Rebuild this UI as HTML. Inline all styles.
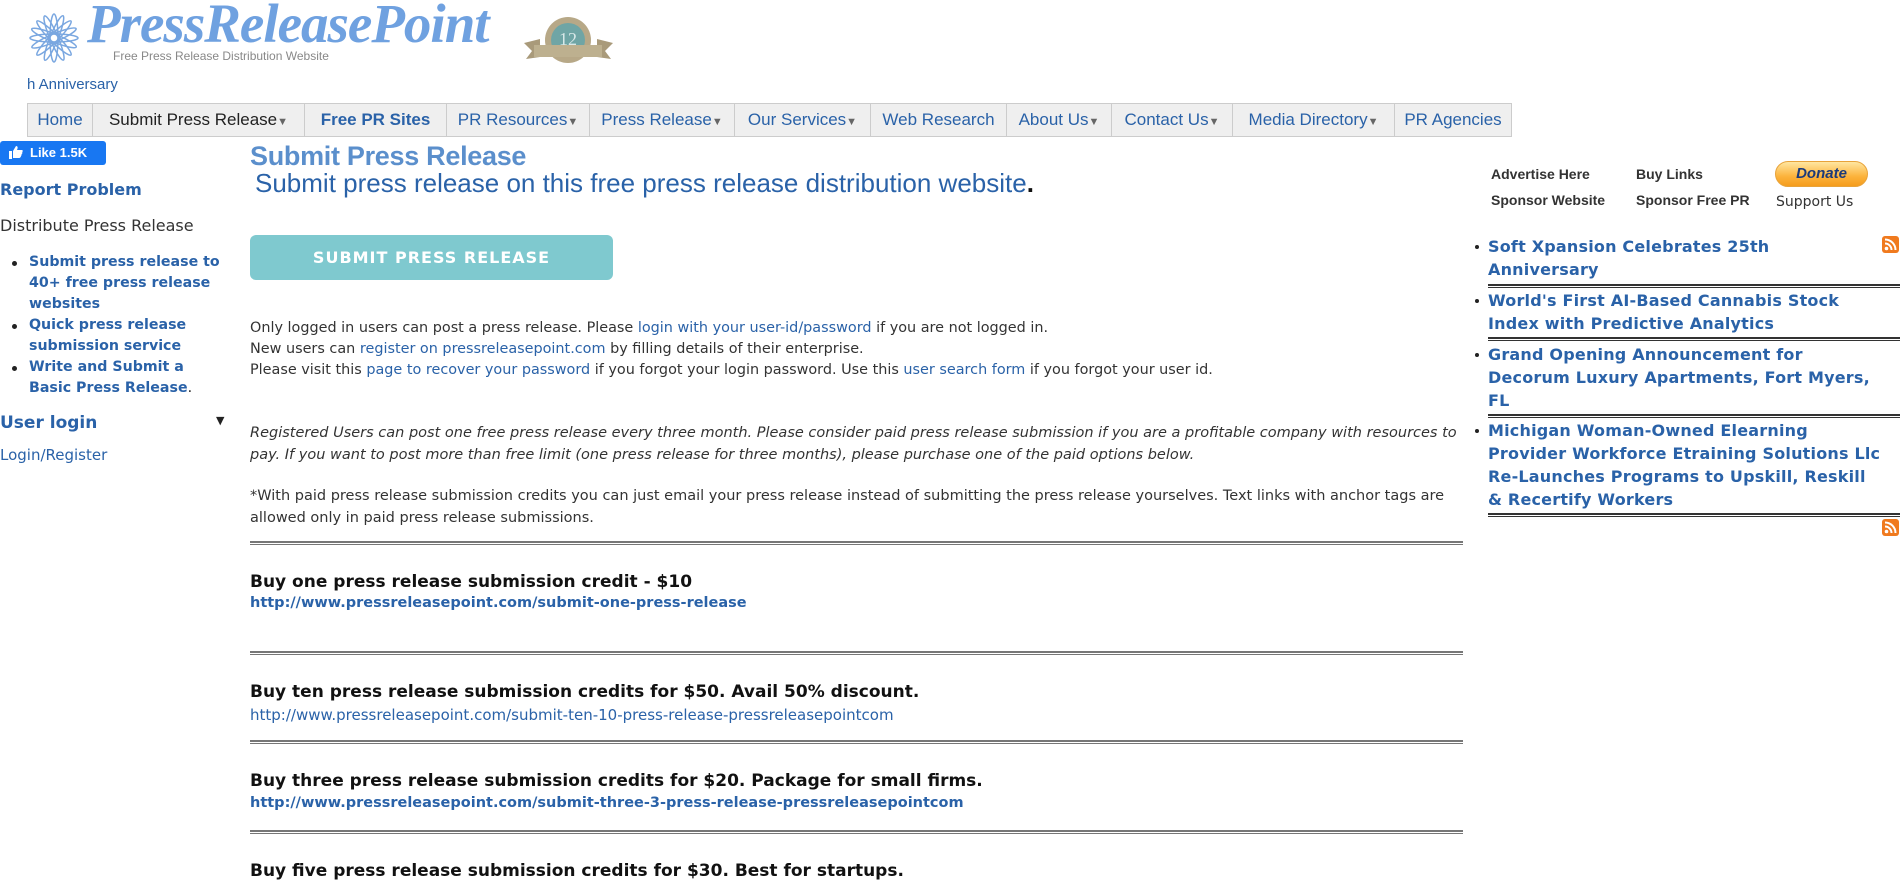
<!DOCTYPE html>
<html><head><meta charset="utf-8"><style>
*{margin:0;padding:0;box-sizing:border-box}
body{width:1903px;height:882px;overflow:hidden;background:#fff;font-family:"DejaVu Sans",sans-serif;position:relative;color:#222}
.a{position:absolute;white-space:nowrap}
a,.l{color:#2a62a8;text-decoration:none}
.nav{position:absolute;left:27px;top:103px;height:34px;display:flex;border:1px solid #ccc;background:#efefef}
.nav div{height:32px;line-height:32px;border-right:1px solid #ccc;font-family:"Liberation Sans",sans-serif;font-size:17px;color:#2a62a8;text-align:center}
.nav div:last-child{border-right:0}
.tri{color:#666;font-size:11px}
.hr{position:absolute;left:250px;width:1213px;height:4px;border-top:2px solid #777;border-bottom:1px solid #777}
.buy{position:absolute;left:250px;font-weight:bold;font-size:17px;white-space:nowrap;color:#111}
.url{position:absolute;left:250px;font-size:15px;color:#2a62a8;white-space:nowrap}
.news{position:absolute;left:1488px;font-weight:bold;font-size:16px;line-height:23px;color:#2a62a8;letter-spacing:.2px}
.news:before{content:"";position:absolute;left:-13px;top:10px;width:4px;height:4px;background:#222;border-radius:50%}
.nh{position:absolute;left:1488px;width:412px;height:4px;border-top:2px solid #333;border-bottom:1px solid #333}
.rss{position:absolute;left:1882px;width:17px;height:17px}
.side li{margin-left:29px;list-style:none;position:relative}
.side li:before{content:"";position:absolute;left:-17px;top:9px;width:5px;height:5px;background:#222;border-radius:50%}
</style></head><body>
<svg class="a" style="left:27px;top:12px" width="54" height="52" viewBox="0 0 54 52"><g fill="none" stroke="#7aa7e0" stroke-width="1.5"><g transform="translate(27,26)">
<ellipse rx="4" ry="24"/><ellipse rx="4" ry="24" transform="rotate(22)"/><ellipse rx="4" ry="24" transform="rotate(45)"/><ellipse rx="4" ry="24" transform="rotate(67)"/><ellipse rx="4" ry="24" transform="rotate(90)"/><ellipse rx="4" ry="24" transform="rotate(112)"/><ellipse rx="4" ry="24" transform="rotate(135)"/><ellipse rx="4" ry="24" transform="rotate(157)"/><circle r="6"/></g></g></svg>
<div class="a" style="left:87px;top:-8px;font-family:'Liberation Serif',serif;font-style:italic;font-weight:bold;font-size:55px;color:#6fa1e0;letter-spacing:-1px">PressReleasePoint</div>
<div class="a" style="left:113px;top:49px;font-family:'Liberation Sans',sans-serif;font-size:12px;color:#888">Free Press Release Distribution Website</div>
<svg class="a" style="left:520px;top:15px" width="97" height="53" viewBox="0 0 97 53"><path d="M4 28 L20 24 L20 42 L6 44 L12 36Z M93 28 L77 24 L77 42 L91 44 L85 36Z" fill="#a99a7a"/><circle cx="48" cy="25" r="23" fill="#b7a887"/><circle cx="48" cy="25" r="17" fill="#6fa5a5"/><rect x="14" y="30" width="68" height="12" fill="#bdb08f"/><text x="48" y="30" font-size="18" fill="#d8e8e8" text-anchor="middle" font-family="Liberation Serif">12</text></svg>
<div class="a" style="left:27px;top:76px;font-family:'Liberation Sans',sans-serif;font-size:15px;color:#2a62a8">h Anniversary</div>
<div class="nav">
<div style="width:65px">Home</div>
<div style="width:212px;color:#222">Submit Press Release<span class="tri">▼</span></div>
<div style="width:142px;font-weight:bold">Free PR Sites</div>
<div style="width:143px">PR Resources<span class="tri">▼</span></div>
<div style="width:145px">Press Release<span class="tri">▼</span></div>
<div style="width:136px">Our Services<span class="tri">▼</span></div>
<div style="width:136px">Web Research</div>
<div style="width:105px">About Us<span class="tri">▼</span></div>
<div style="width:121px">Contact Us<span class="tri">▼</span></div>
<div style="width:162px">Media Directory<span class="tri">▼</span></div>
<div style="width:116px">PR Agencies</div>
</div>
<div class="a" style="left:0;top:141px;width:106px;height:24px;background:#1877f2;border-radius:3px;color:#fff;font-family:'Liberation Sans',sans-serif;font-weight:bold;font-size:13px;line-height:24px;padding-left:30px">Like 1.5K<svg style="position:absolute;left:9px;top:5px" width="14" height="13" viewBox="0 0 14 13"><path d="M0 5h3v8H0z M4 5 L7 0 C9 0 9 2 8 4 H13 C14 4 14 6 13 6 C14 7 13 8 12.5 8 C13 9 12 10 12 10 C12 11 11 12 10 12 H4Z" fill="#fff"/></svg></div>
<div class="a" style="left:0;top:180px;font-size:16px;font-weight:bold;color:#2a62a8">Report Problem</div>
<div class="a" style="left:0;top:216px;font-size:16px;color:#333">Distribute Press Release</div>
<ul class="side a" style="left:0;top:252px;font-size:14.2px;font-weight:bold;line-height:21px;color:#2a62a8">
<li>Submit press release to<br>40+ free press release<br>websites</li>
<li>Quick press release<br>submission service</li>
<li>Write and Submit a<br>Basic Press Release<span style="color:#222;font-weight:normal">.</span></li></ul>
<div class="a" style="left:0;top:413px;font-size:17px;font-weight:bold;color:#2a62a8">User login</div>
<div class="a" style="left:216px;top:414px;font-size:11px;color:#222">▼</div>
<div class="a" style="left:0;top:446px;font-size:15px;color:#2a62a8">Login/Register</div>

<div class="a" style="left:250px;top:141px;font-family:'Liberation Sans',sans-serif;font-size:27px;font-weight:bold;color:#5b8fcc;letter-spacing:-.3px">Submit Press Release</div>
<div class="a" style="left:255px;top:168px;font-family:'Liberation Sans',sans-serif;font-size:26px;color:#2a62a8">Submit press release on this free press release distribution website<span style="color:#111;font-weight:bold">.</span></div>
<div class="a" style="left:250px;top:235px;width:363px;height:45px;background:#7fc9cf;border-radius:6px;color:#fff;font-weight:bold;font-size:16px;line-height:45px;text-align:center;letter-spacing:1px">SUBMIT PRESS RELEASE</div>
<div class="a" style="left:250px;top:318px;font-size:14.4px;line-height:21px;color:#333">Only logged in users can post a press release. Please <a>login with your user-id/password</a> if you are not logged in.<br>New users can <a>register on pressreleasepoint.com</a> by filling details of their enterprise.<br>Please visit this <a>page to recover your password</a> if you forgot your login password. Use this <a>user search form</a> if you forgot your user id.</div>
<div class="a" style="left:250px;top:422px;width:1213px;white-space:normal;font-size:14.5px;line-height:22px;font-style:italic;color:#333">Registered Users can post one free press release every three month. Please consider paid press release submission if you are a profitable company with resources to pay. If you want to post more than free limit (one press release for three months), please purchase one of the paid options below.</div>
<div class="a" style="left:250px;top:485px;width:1213px;white-space:normal;font-size:14.5px;line-height:22px;color:#333">*With paid press release submission credits you can just email your press release instead of submitting the press release yourselves. Text links with anchor tags are allowed only in paid press release submissions.</div>
<div class="hr" style="top:541px"></div>
<div class="buy" style="top:572px">Buy one press release submission credit - $10</div>
<div class="url" style="top:595px;font-weight:bold;font-size:14.5px">http://www.pressreleasepoint.com/submit-one-press-release</div>
<div class="hr" style="top:651px"></div>
<div class="buy" style="top:682px">Buy ten press release submission credits for $50. Avail 50% discount.</div>
<div class="url" style="top:706px">http://www.pressreleasepoint.com/submit-ten-10-press-release-pressreleasepointcom</div>
<div class="hr" style="top:740px"></div>
<div class="buy" style="top:771px">Buy three press release submission credits for $20. Package for small firms.</div>
<div class="url" style="top:795px;font-weight:bold;font-size:14.5px">http://www.pressreleasepoint.com/submit-three-3-press-release-pressreleasepointcom</div>
<div class="hr" style="top:830px"></div>
<div class="buy" style="top:861px">Buy five press release submission credits for $30. Best for startups.</div>

<div class="a" style="left:1491px;top:166px;font-size:14px;font-weight:bold;color:#333;font-family:'Liberation Sans',sans-serif">Advertise Here</div>
<div class="a" style="left:1636px;top:166px;font-size:14px;font-weight:bold;color:#333;font-family:'Liberation Sans',sans-serif">Buy Links</div>
<div class="a" style="left:1491px;top:192px;font-size:14px;font-weight:bold;color:#333;font-family:'Liberation Sans',sans-serif">Sponsor Website</div>
<div class="a" style="left:1636px;top:192px;font-size:14px;font-weight:bold;color:#333;font-family:'Liberation Sans',sans-serif">Sponsor Free PR</div>
<div class="a" style="left:1775px;top:161px;width:93px;height:26px;border-radius:13px;background:linear-gradient(#ffe6a0,#fcb33c 60%,#f59c1c);border:1px solid #e8a33a;text-align:center;font:italic bold 15px/24px 'Liberation Sans',sans-serif;color:#1b3a7a">Donate</div>
<div class="a" style="left:1776px;top:194px;font-size:14px;color:#333">Support Us</div>
<svg class="rss" style="top:236px" viewBox="0 0 17 17"><rect width="17" height="17" rx="3" fill="#f07a1e"/><circle cx="4.5" cy="12.5" r="1.8" fill="#fff"/><path d="M3 7.5a6.5 6.5 0 0 1 6.5 6.5M3 3.5a10.5 10.5 0 0 1 10.5 10.5" stroke="#fff" stroke-width="2" fill="none"/></svg>
<svg class="rss" style="top:519px" viewBox="0 0 17 17"><rect width="17" height="17" rx="3" fill="#f07a1e"/><circle cx="4.5" cy="12.5" r="1.8" fill="#fff"/><path d="M3 7.5a6.5 6.5 0 0 1 6.5 6.5M3 3.5a10.5 10.5 0 0 1 10.5 10.5" stroke="#fff" stroke-width="2" fill="none"/></svg>
<div class="news" style="top:235px">Soft Xpansion Celebrates 25th<br>Anniversary</div>
<div class="nh" style="top:284px"></div>
<div class="news" style="top:289px">World's First AI-Based Cannabis Stock<br>Index with Predictive Analytics</div>
<div class="nh" style="top:337px"></div>
<div class="news" style="top:343px">Grand Opening Announcement for<br>Decorum Luxury Apartments, Fort Myers,<br>FL</div>
<div class="nh" style="top:414px"></div>
<div class="news" style="top:419px">Michigan Woman-Owned Elearning<br>Provider Workforce Etraining Solutions Llc<br>Re-Launches Programs to Upskill, Reskill<br>&amp; Recertify Workers</div>
<div class="nh" style="top:513px"></div>
</body></html>
